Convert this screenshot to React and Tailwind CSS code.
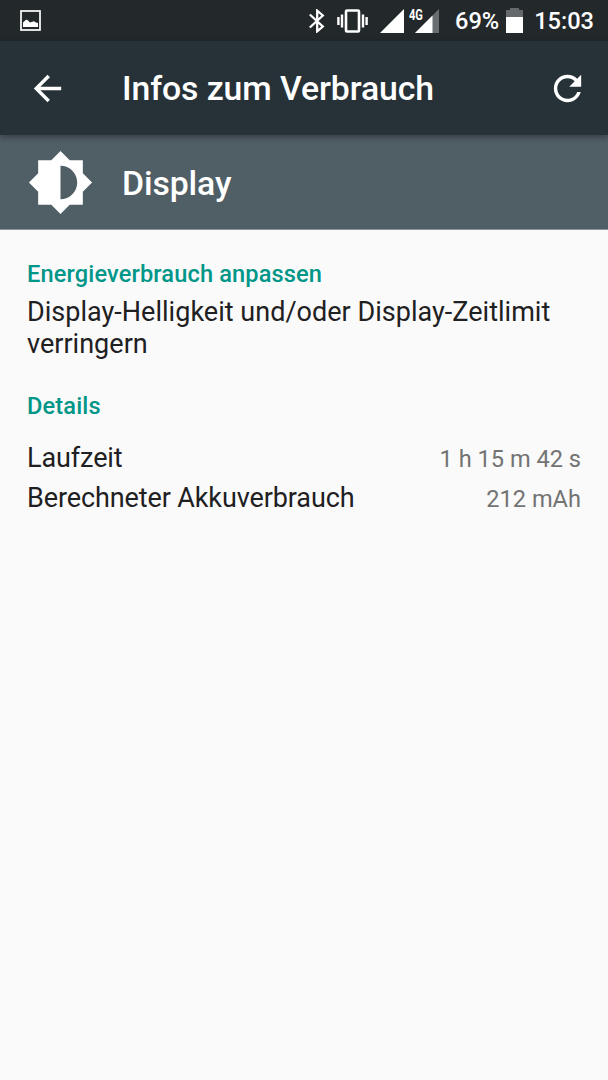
import React from 'react';

const details = [
    { label: 'Laufzeit', value: '1 h 15 m 42 s' },
    { label: 'Berechneter Akkuverbrauch', value: '212 mAh' },
];

function StatusBar() {
    return (
        <div className="flex h-[41px] items-center bg-[#23282b] pl-5 pr-[14px] text-white">
            <svg className="h-[21px] w-[21px]" viewBox="0 0 21 21" fill="none">
                <rect x="1" y="1" width="19" height="19" stroke="currentColor" strokeWidth="1.7" />
                <path d="M3 17v-4.500l3-2.700 1.500.2L10 12.500l4-1.200 2 1.200 2 .5v4z" fill="currentColor" />
            </svg>
            <svg className="ml-[267px] h-6 w-[17px]" viewBox="0 0 17 24" fill="none" stroke="currentColor" strokeWidth="2.300">
                <path d="M1.800 5.500l13 12L9.200 22.300V1.700l5.600 4.800-13 12" />
            </svg>
            <svg className="ml-3 h-6 w-[31px]" viewBox="0 0 31 24" fill="none" stroke="currentColor">
                <rect x="9" y="1.500" width="13" height="21" rx="1" strokeWidth="2.600" />
                <path d="M1.400 8v8M5 5.500v13M26 5.500v13M29.600 8v8" strokeWidth="2.400" />
            </svg>
            <svg className="ml-3 h-6 w-6" viewBox="0 0 24 24" fill="currentColor">
                <path d="M24 0v24H0z" />
            </svg>
            <div className="relative ml-[11px] h-6 w-6">
                <svg className="h-6 w-6" viewBox="0 0 24 24">
                    <path d="M24 0v24H0z" fill="#6b6e70" />
                    <path d="M17.500 6.500V24H0z" fill="#fff" />
                </svg>
                <span className="absolute -left-[6px] -top-px origin-left scale-x-[0.74] text-[15px] font-bold leading-[14px]">4G</span>
            </div>
            <span className="ml-4 w-[44px] whitespace-nowrap text-[23.600px] font-medium leading-[28px]">69%</span>
            <svg className="ml-[7px] h-[25px] w-[17px]" viewBox="0 0 17 25">
                <path d="M0 2h4V0h9v2h4v7H0z" fill="#65696b" />
                <path d="M0 9h17v16H0z" fill="#fff" />
            </svg>
            <span className="ml-auto text-[23.600px] font-medium leading-[28px]">15:03</span>
        </div>
    );
}

function AppBar() {
    return (
        <header className="relative flex h-[94px] items-center bg-[#273238] pl-[27px] pr-5 text-white shadow-[0_2px_6px_rgba(0,0,0,0.35)]">
            <button aria-label="Zurück">
                <svg className="h-[41px] w-[41px]" viewBox="0 0 24 24" fill="currentColor">
                    <path d="M20 11H7.830l5.590-5.590L12 4l-8 8 8 8 1.410-1.410L7.830 13H20v-2z" />
                </svg>
            </button>
            <h1 className="ml-[54px] pt-0.5 text-[33.800px] font-medium leading-10 tracking-[-0.1px]">Infos zum Verbrauch</h1>
            <button className="ml-auto" aria-label="Aktualisieren">
                <svg className="h-[41px] w-[41px]" viewBox="0 0 24 24" fill="currentColor">
                    <path d="M17.650 6.350C16.200 4.900 14.210 4 12 4c-4.420 0-7.990 3.580-7.990 8s3.570 8 7.990 8c3.730 0 6.840-2.550 7.730-6h-2.080c-.82 2.330-3.040 4-5.650 4-3.310 0-6-2.690-6-6s2.690-6 6-6c1.660 0 3.140.69 4.220 1.780L13 11h7V4l-2.350 2.350z" />
                </svg>
            </button>
        </header>
    );
}

function App() {
    return (
        <div className="flex min-h-screen flex-col bg-[#fafafa] font-['Roboto',sans-serif] text-[#1e2022]">
            <StatusBar />
            <AppBar />
            <div className="flex h-[95px] items-center border-b border-[#8b959a] bg-[#505e65] pl-[27px] text-white">
                <svg className="h-[67px] w-[67px]" viewBox="0 0 24 24" fill="currentColor">
                    <path d="M20 15.310L23.310 12 20 8.690V4h-4.690L12 .69 8.690 4H4v4.690L.69 12 4 15.310V20h4.690L12 23.310 15.310 20H20v-4.690zM12 18V6c3.310 0 6 2.690 6 6s-2.690 6-6 6z" />
                </svg>
                <h2 className="ml-7 pt-[3px] text-[33.800px] font-medium leading-10 tracking-[-0.12px]">Display</h2>
            </div>
            <main className="px-[27px] pt-[30px]">
                <h3 className="text-[23.600px] font-medium leading-7 tracking-[0.13px] text-[#009688]">Energieverbrauch anpassen</h3>
                <p className="mt-2 text-[27px] leading-8 tracking-[0.02px]">Display-Helligkeit und/oder Display-Zeitlimit verringern</p>
                <h3 className="mt-8 text-[23.600px] font-medium leading-7 tracking-[0.13px] text-[#009688]">Details</h3>
                <div className="mt-[22px]">
                    {details.map(item => (
                        <div key={item.label} className="flex h-10 items-baseline justify-between">
                            <span className="text-[27px] leading-8 tracking-[-0.11px]">{item.label}</span>
                            <span className="text-[23.600px] leading-7 text-[#737373]">{item.value}</span>
                        </div>
                    ))}
                </div>
            </main>
        </div>
    );
}

export default App;
